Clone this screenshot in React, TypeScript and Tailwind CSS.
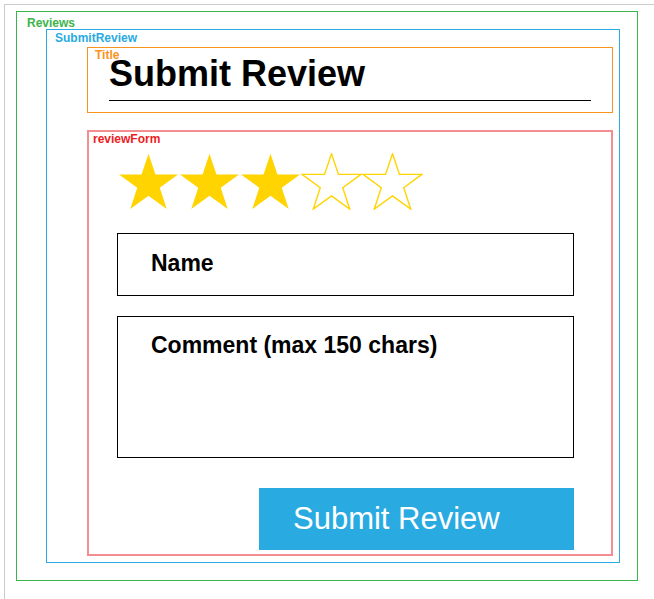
import React from 'react'

const STAR_POINTS =
  '30.5,0.8 37.46,21.42 59.98,21.42 41.76,34.66 48.72,56.08 30.5,42.84 12.28,56.08 19.24,34.66 1.02,21.42 23.54,21.42'

function Star({ filled }: { filled: boolean }) {
  return (
    <svg width="61" height="57" viewBox="0 0 61 57" className="block shrink-0">
      <polygon
        points={STAR_POINTS}
        fill={filled ? '#ffd400' : 'none'}
        stroke="#ffd400"
        strokeWidth={filled ? 0 : 1.4}
        strokeLinejoin="miter"
      />
    </svg>
  )
}

function Label({ text, className }: { text: string; className: string }) {
  return (
    <span className={`absolute text-[12px] leading-[14px] font-bold ${className}`}>{text}</span>
  )
}

export default function App() {
  const rating = 3

  return (
    <div className="font-['Liberation_Sans',Arial,sans-serif] bg-white min-h-[599px]">
      <div className="ml-1 mt-1 h-[595px] border-l border-t border-[#cccccc]">
        {/* Reviews */}
        <div className="relative ml-[11px] mt-[6px] w-[622px] h-[570px] border border-[#3cb44b] pl-[29px] pt-[17px]">
          <Label text="Reviews" className="left-[10px] top-[4px] text-[#3cb44b]" />

          {/* SubmitReview */}
          <div className="relative w-[574px] h-[534px] border border-[#29abe2] pl-[40px] pt-[17px]">
            <Label text="SubmitReview" className="left-[8px] top-[1px] text-[#29abe2]" />

            {/* Title */}
            <div className="relative w-[526px] h-[66px] border border-[#f7941d] pl-[21px] pt-[6px]">
              <Label text="Title" className="left-[7px] top-0 text-[#f7941d]" />
              <h2 className="w-[482px] border-b border-black pb-[6px] text-[36px] leading-[40px] font-bold text-black">
                Submit Review
              </h2>
            </div>

            {/* reviewForm */}
            <form
              className="relative mt-[17px] w-[526px] h-[426px] border-2 border-[#f38d8f] pl-[28px] pt-[21px] flex flex-col"
              onSubmit={e => e.preventDefault()}
            >
              <Label text="reviewForm" className="left-[4px] top-0 text-[#ed1c24]" />

              <div className="ml-[1px] flex">
                {[1, 2, 3, 4, 5].map(n => (
                  <Star key={n} filled={n <= rating} />
                ))}
              </div>

              <input
                type="text"
                placeholder="Name"
                className="mt-[23px] w-[457px] h-[63px] border border-black pl-[33px] pb-[2px] text-[23px] font-bold text-black outline-none placeholder:text-black"
              />

              <textarea
                placeholder="Comment (max 150 chars)"
                maxLength={150}
                className="mt-[20px] w-[457px] h-[142px] border border-black pl-[33px] pt-[15px] text-[23px] leading-[26px] font-bold text-black outline-none resize-none placeholder:text-black"
              />

              <button
                type="submit"
                className="mt-[30px] ml-[142px] w-[315px] h-[62px] bg-[#29abe2] pl-[34px] text-left text-[31px] text-white"
              >
                Submit Review
              </button>
            </form>
          </div>
        </div>
      </div>
    </div>
  )
}
